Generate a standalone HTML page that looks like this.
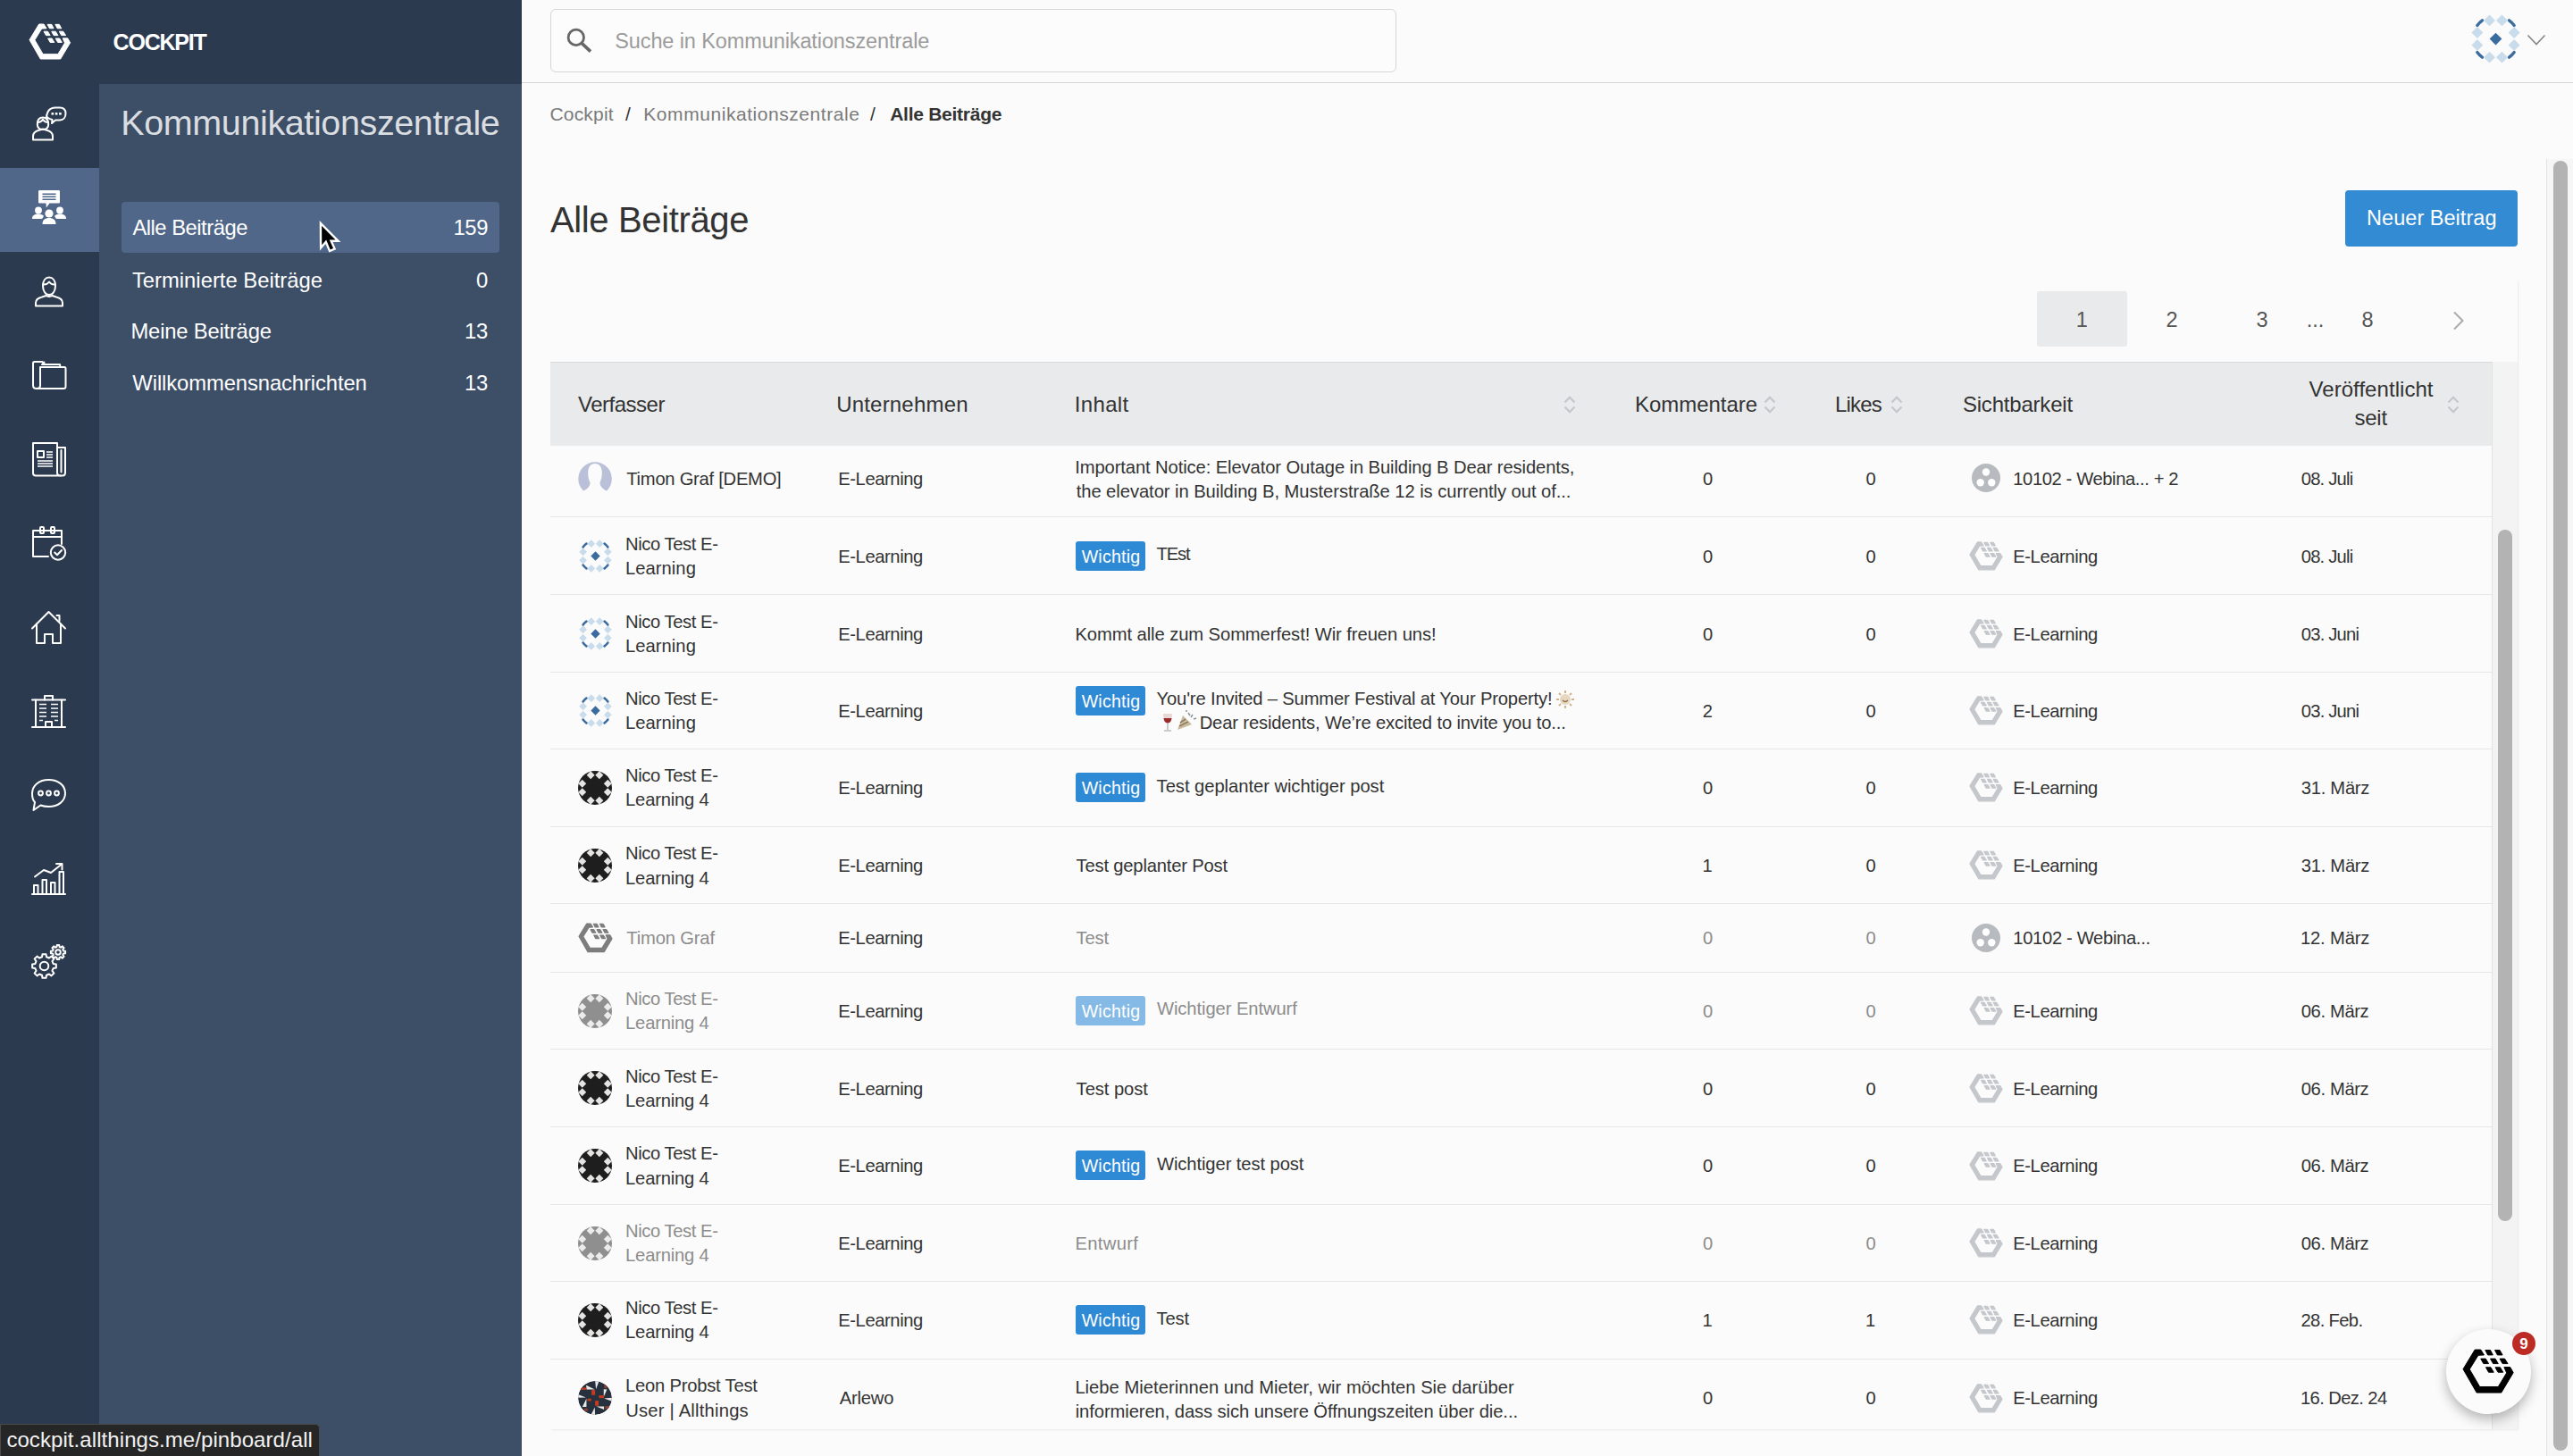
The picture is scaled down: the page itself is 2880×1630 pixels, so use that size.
<!DOCTYPE html>
<html><head><meta charset="utf-8"><title>Alle Beiträge</title>
<style>
html,body{margin:0;padding:0;}
body{width:2880px;height:1630px;overflow:hidden;position:relative;background:#fbfbfb;font-family:'Liberation Sans', sans-serif;}
.t{position:absolute;line-height:1;white-space:nowrap;}
svg{overflow:visible}
</style></head><body>
<div style="position:absolute;left:584.00px;top:0.00px;width:2296.00px;height:1630.00px;background:#fbfbfb;"></div><div style="position:absolute;left:584.00px;top:0.00px;width:2296.00px;height:92.00px;background:#fbfbfb;"></div><div style="position:absolute;left:584.00px;top:92.00px;width:2296.00px;height:1.00px;background:#d5d7da;"></div><div style="position:absolute;left:0.00px;top:0.00px;width:111.00px;height:1630.00px;background:#2c3a4f;"></div><div style="position:absolute;left:111.00px;top:0.00px;width:473.00px;height:94.00px;background:#2c3a4f;"></div><div style="position:absolute;left:111.00px;top:94.00px;width:473.00px;height:1536.00px;background:#3d4e67;"></div><div style="position:absolute;left:0.00px;top:188.00px;width:111.00px;height:94.00px;background:#506789;"></div><svg style="position:absolute;left:32.50px;top:26.50px;" width="45.60" height="39.01" viewBox="155 245 1280 1095"><g fill="#ffffff" stroke="#ffffff" stroke-width="28" stroke-linejoin="round"><path d="M455 245 L605 245 L690 380 L540 388 L320 745 L580 1190 L1050 1190 L1265 835 L1200 690 L1355 690 L1435 830 L1130 1340 L500 1340 L155 740 Z"/><path d="M720 255 L850 255 L915 380 L785 380 Z"/><path d="M965 255 L1090 255 L1160 380 L1030 380 Z"/><path d="M605 475 L730 475 L805 600 L675 600 Z"/><path d="M850 475 L975 475 L1050 600 L920 600 Z"/><path d="M1090 475 L1215 475 L1295 600 L1160 600 Z"/><path d="M735 695 L860 695 L935 820 L805 820 Z"/><path d="M975 695 L1100 695 L1175 820 L1045 820 Z"/></g></svg><svg style="position:absolute;left:36px;top:119px" width="38" height="38" viewBox="0 0 38 38"><g stroke="#fff" stroke-width="2" fill="none" stroke-linejoin="round" stroke-linecap="round"><path d="M16 14.5 C16 6 19 1.5 26 1.5 L31 1.5 C35.5 1.5 37.5 4 37.5 8 C37.5 12.5 35 15.5 31 15.5 L26 15.5 L22 19 L22.5 15 C19 14 16 12 16 10"/><path d="M1 37.5 L1 33.5 C1 29.5 4.5 27.5 8.5 26.5 L12 25.5 L15.5 26.5 C19.5 27.5 23 29.5 23 33.5 L23 37.5 Z"/><path d="M5.8 20 C5.8 15 8.5 12.5 12 12.5 C15.5 12.5 18.2 15 18.2 20 C18.2 24 15.5 26 12 26 C8.5 26 5.8 24 5.8 20 Z"/><path d="M6 18 C9 18 11 16.5 12 14.5 C13 16.5 15 18 18 18"/></g><g fill="#fff"><rect x="21.5" y="7" width="2.6" height="2.6"/><rect x="25.8" y="7" width="2.6" height="2.6"/><rect x="30.1" y="7" width="2.6" height="2.6"/></g></svg><svg style="position:absolute;left:36px;top:213px" width="38" height="38" viewBox="0 0 38 38"><path fill="#fff" d="M8.5 0 L29.5 0 C30.5 0 31 0.5 31 1.5 L31 13 C31 14 30.5 14.5 29.5 14.5 L19.5 14.5 L15.8 19.5 L15.5 14.5 L8.5 14.5 C7.5 14.5 7 14 7 13 L7 1.5 C7 0.5 7.5 0 8.5 0 Z"/><g stroke="#4f6789" stroke-width="1.6"><path d="M11.5 4.3 H26.5 M11.5 7.3 H26.5 M11.5 10.3 H26.5"/></g><g fill="#fff"><circle cx="7" cy="22.5" r="3.9"/><path d="M0 32 C0 27.8 3 26.5 7 26.5 C10 26.5 12 27.5 13 29 L11 32 Z"/><circle cx="31" cy="22.5" r="3.9"/><path d="M38 32 C38 27.8 35 26.5 31 26.5 C28 26.5 26 27.5 25 29 L27 32 Z"/><circle cx="19" cy="26" r="4.6"/><path d="M11.5 38 C11.5 33 14.5 31 19 31 C23.5 31 26.5 33 26.5 38 Z"/></g></svg><svg style="position:absolute;left:39px;top:309px" width="32" height="35" viewBox="0 0 32 35"><g stroke="#fff" stroke-width="2" fill="none" stroke-linejoin="round" stroke-linecap="round"><path d="M1 33.5 L1 30 C1 26.5 4 24.5 8 23.5 L12.5 22 L16 23 L19.5 22 L24 23.5 C28 24.5 31 26.5 31 30 L31 33.5 Z"/><path d="M9 11 C9 5 12 1.5 16 1.5 C20 1.5 23 5 23 11 C23 17 20 21 16 21 C12 21 9 17 9 11 Z"/><path d="M9.2 9.5 C12 10 14.5 8.5 16 6.5 C17.5 8.5 20 10 22.8 9.5"/></g></svg><svg style="position:absolute;left:36px;top:404px" width="38" height="32" viewBox="0 0 38 32"><g stroke="#fff" stroke-width="2" fill="none" stroke-linejoin="round" stroke-linecap="round"><path d="M5 31 C2.5 31 1 29.5 1 27.5 L1 2.5 C1 1.5 1.5 1 2.5 1 L11.5 1 L13 4 L13.5 1.5"/><path d="M5 31 C7.5 31 9 29.5 9 27.5 L9 7 L36 7 C37 7 37.5 7.5 37.5 8.5 L37.5 29 C37.5 30.5 36.5 31 35 31 Z"/><path d="M11 4 L31 4 L31.5 7"/></g></svg><svg style="position:absolute;left:36px;top:495px" width="38" height="39" viewBox="0 0 38 39"><g stroke="#fff" stroke-width="2" fill="none" stroke-linejoin="round" stroke-linecap="round"><path d="M1 1 L28 1 L28 34 C28 36 29.5 37.5 31.5 37.5 L4 37.5 C2 37.5 1 36.5 1 34.5 Z"/><path d="M28 6 L37 6 L37 34 C37 36 36 37.5 34 37.5 L31.5 37.5"/><path d="M32.5 9 L32.5 33.5"/><rect x="6" y="10" width="7" height="7"/></g><g stroke="#fff" stroke-width="1.6"><path d="M16 11 H23 M16 14 H23 M16 17 H23 M6 21 H23 M6 24 H23 M6 27 H23"/></g></svg><svg style="position:absolute;left:36px;top:589px" width="39" height="39" viewBox="0 0 39 39"><g stroke="#fff" stroke-width="2" fill="none" stroke-linejoin="round" stroke-linecap="round"><path d="M18 34 L1 34 L1 5 L33 5 L33 20"/><path d="M1 12 L33 12"/><rect x="9" y="1" width="4" height="7" rx="1"/><rect x="21" y="1" width="4" height="7" rx="1"/><circle cx="29" cy="29.5" r="8.2"/><path d="M25.2 29.5 L28 32.3 L33 27"/></g></svg><svg style="position:absolute;left:35px;top:684px" width="39" height="38" viewBox="0 0 39 38"><g stroke="#fff" stroke-width="2" fill="none" stroke-linejoin="round" stroke-linecap="round"><path d="M1 19.5 L19.5 1 L38 19.5"/><path d="M6 14.5 L6 36 L15 36 L15 26 L24 26 L24 36 L33 36 L33 14.5"/><path d="M28.5 5 L31.5 5 L31.5 11"/></g></svg><svg style="position:absolute;left:35px;top:777px" width="39" height="39" viewBox="0 0 39 39"><g stroke="#fff" stroke-width="2" fill="none" stroke-linejoin="round" stroke-linecap="round"><path d="M1 37 L38 37"/><path d="M1 6.5 L38 6.5"/><path d="M5 6.5 L5 37 M34 6.5 L34 37"/><path d="M15 6.5 L15 2 L24 2 L24 6.5"/><path d="M16 37 L16 31 L23 31 L23 37"/></g><g stroke="#fff" stroke-width="1.6"><path d="M9 11.5 H17 M22 11.5 H30 M9 16 H17 M22 16 H30 M9 20.5 H17 M22 20.5 H30 M9 25 H17 M22 25 H30 M9 29.5 H13 M26 29.5 H30"/></g></svg><svg style="position:absolute;left:35px;top:872px" width="39" height="36" viewBox="0 0 39 36"><g stroke="#fff" stroke-width="2" fill="none" stroke-linejoin="round" stroke-linecap="round"><path d="M4 26 C1.5 23.5 1 20 1 16.5 C1 7 9 1 19.5 1 C30 1 38 7 38 16 C38 25 30 31 19.5 31 C16 31 13 30.5 10.5 29.5 L2.5 35 Z"/><circle cx="10.5" cy="16" r="2.4"/><circle cx="19.5" cy="16" r="2.4"/><circle cx="28.5" cy="16" r="2.4"/></g></svg><svg style="position:absolute;left:35px;top:965px" width="39" height="37" viewBox="0 0 39 37"><g stroke="#fff" stroke-width="2" fill="none" stroke-linejoin="round" stroke-linecap="round"><path d="M1 36 L38 36"/><rect x="3" y="26" width="4.5" height="10"/><rect x="12.5" y="20" width="4.5" height="16"/><rect x="22" y="23" width="4.5" height="13"/><rect x="31.5" y="11" width="4.5" height="25"/><path d="M4 16.5 L14 9 L22 12 L34 2.5"/><path d="M28 2 L34.5 2 L34.5 8.5"/></g></svg><svg style="position:absolute;left:35px;top:1057px" width="40" height="40" viewBox="0 0 40 40"><g stroke="#fff" stroke-width="2" fill="none" stroke-linejoin="round" stroke-linecap="round"><path d="M24.71 22.03 L27.85 22.47 L27.85 26.53 L24.71 26.97 L23.46 29.97 L25.37 32.50 L22.50 35.37 L19.97 33.46 L16.97 34.71 L16.53 37.85 L12.47 37.85 L12.03 34.71 L9.03 33.46 L6.50 35.37 L3.63 32.50 L5.54 29.97 L4.29 26.97 L1.15 26.53 L1.15 22.47 L4.29 22.03 L5.54 19.03 L3.63 16.50 L6.50 13.63 L9.03 15.54 L12.03 14.29 L12.47 11.15 L16.53 11.15 L16.97 14.29 L19.97 15.54 L22.50 13.63 L25.37 16.50 L23.46 19.03 Z"/><circle cx="14.5" cy="24.5" r="4.8"/><path d="M36.03 7.54 L38.11 7.76 L38.11 10.24 L36.03 10.46 L35.29 12.23 L36.61 13.86 L34.86 15.61 L33.23 14.29 L31.46 15.03 L31.24 17.11 L28.76 17.11 L28.54 15.03 L26.77 14.29 L25.14 15.61 L23.39 13.86 L24.71 12.23 L23.97 10.46 L21.89 10.24 L21.89 7.76 L23.97 7.54 L24.71 5.77 L23.39 4.14 L25.14 2.39 L26.77 3.71 L28.54 2.97 L28.76 0.89 L31.24 0.89 L31.46 2.97 L33.23 3.71 L34.86 2.39 L36.61 4.14 L35.29 5.77 Z"/><circle cx="30" cy="9" r="2.8"/></g></svg><div class="t" style="left:126.60px;top:34.85px;font-size:25px;color:#ffffff;font-weight:700;letter-spacing:-1.219px;">COCKPIT</div><div class="t" style="left:135.24px;top:117.83px;font-size:39.5px;color:rgba(255,255,255,0.82);font-weight:400;letter-spacing:-0.380px;">Kommunikationszentrale</div><div style="position:absolute;left:136.00px;top:226.00px;width:423.00px;height:57.00px;background:#506789;border-radius:4px;"></div><div class="t" style="left:148.40px;top:243.47px;font-size:23.8px;color:#ffffff;font-weight:400;letter-spacing:-0.495px;">Alle Beiträge</div><div class="t" style="left:507.51px;top:243.47px;font-size:23.8px;color:#ffffff;font-weight:400;letter-spacing:-0.415px;">159</div><div class="t" style="left:147.92px;top:301.57px;font-size:23.8px;color:#ffffff;font-weight:400;letter-spacing:0.007px;">Terminierte Beiträge</div><div class="t" style="left:532.98px;top:301.57px;font-size:23.8px;color:#ffffff;font-weight:400;">0</div><div class="t" style="left:146.50px;top:359.27px;font-size:23.8px;color:#ffffff;font-weight:400;letter-spacing:-0.203px;">Meine Beiträge</div><div class="t" style="left:520.12px;top:359.27px;font-size:23.8px;color:#ffffff;font-weight:400;letter-spacing:-0.222px;">13</div><div class="t" style="left:148.34px;top:416.77px;font-size:23.8px;color:#ffffff;font-weight:400;letter-spacing:-0.095px;">Willkommensnachrichten</div><div class="t" style="left:520.12px;top:416.77px;font-size:23.8px;color:#ffffff;font-weight:400;letter-spacing:-0.222px;">13</div><div style="position:absolute;left:616px;top:10px;width:947px;height:71px;border:1px solid #d4d6d9;border-radius:6px;background:#fcfcfc;box-sizing:border-box"></div><svg style="position:absolute;left:634px;top:31px" width="29" height="29" viewBox="0 0 29 29"><circle cx="10.8" cy="10.9" r="8.7" stroke="#666" stroke-width="2.8" fill="none"/><path d="M16.6 16.9 L27 26.6" stroke="#666" stroke-width="3.6" stroke-linecap="butt"/></svg><div class="t" style="left:688.24px;top:34.83px;font-size:23.5px;color:#9b9b9b;font-weight:400;letter-spacing:-0.107px;">Suche in Kommunikationszentrale</div><svg style="position:absolute;left:2766.00px;top:15.80px" width="55" height="55" viewBox="-50 -50 100 100"><path d="M-12.7 -49.3 L-0.8999999999999986 -37.5 L-12.7 -25.7 L-24.5 -37.5 Z M12.7 -49.3 L24.5 -37.5 L12.7 -25.7 L0.8999999999999986 -37.5 Z M-37.5 -24.5 L-25.7 -12.7 L-37.5 -0.8999999999999986 L-49.3 -12.7 Z M-37.5 0.8999999999999986 L-25.7 12.7 L-37.5 24.5 L-49.3 12.7 Z M37.5 -24.5 L49.3 -12.7 L37.5 -0.8999999999999986 L25.7 -12.7 Z M37.5 0.8999999999999986 L49.3 12.7 L37.5 24.5 L25.7 12.7 Z M-12.7 25.7 L-0.8999999999999986 37.5 L-12.7 49.3 L-24.5 37.5 Z M12.7 25.7 L24.5 37.5 L12.7 49.3 L0.8999999999999986 37.5 Z" fill="#c9dcec"/><path d="M0 -12.5 L12.5 0 L0 12.5 L-12.5 0 Z" fill="#3b6b9f"/><path d="M37.62 27.33 A46.5 46.5 0 0 1 27.33 37.62" stroke="#3b6b9f" stroke-width="6" fill="none" stroke-linecap="round"/><path d="M-27.33 37.62 A46.5 46.5 0 0 1 -37.62 27.33" stroke="#3b6b9f" stroke-width="6" fill="none" stroke-linecap="round"/><path d="M-37.62 -27.33 A46.5 46.5 0 0 1 -27.33 -37.62" stroke="#3b6b9f" stroke-width="6" fill="none" stroke-linecap="round"/><path d="M27.33 -37.62 A46.5 46.5 0 0 1 37.62 -27.33" stroke="#3b6b9f" stroke-width="6" fill="none" stroke-linecap="round"/></svg><svg style="position:absolute;left:2828px;top:38px" width="22" height="14" viewBox="0 0 22 14"><path d="M1.5 1.5 L11 11.5 L20.5 1.5" stroke="#858585" stroke-width="1.6" fill="none"/></svg><div class="t" style="left:615.45px;top:116.85px;font-size:21px;color:#7a7a7a;font-weight:400;letter-spacing:0.187px;">Cockpit</div><div class="t" style="left:700.00px;top:116.85px;font-size:21px;color:#333;font-weight:400;">/</div><div class="t" style="left:720.32px;top:116.85px;font-size:21px;color:#7a7a7a;font-weight:400;letter-spacing:0.553px;">Kommunikationszentrale</div><div class="t" style="left:974.00px;top:116.85px;font-size:21px;color:#333;font-weight:400;">/</div><div class="t" style="left:996.18px;top:116.85px;font-size:21px;color:#333;font-weight:700;letter-spacing:-0.263px;">Alle Beiträge</div><div class="t" style="left:616.00px;top:226.00px;font-size:40px;color:#333;font-weight:400;letter-spacing:-0.367px;">Alle Beiträge</div><div style="position:absolute;left:2625.00px;top:213.00px;width:193.00px;height:62.60px;background:#338bd3;border-radius:4px;"></div><div class="t" style="left:2649.12px;top:233.43px;font-size:23.5px;color:#ffffff;font-weight:400;letter-spacing:0.029px;">Neuer Beitrag</div><div style="position:absolute;left:616px;top:314px;width:2202px;height:1286px;background:#fbfbfb;box-shadow:1px 1px 2px rgba(0,0,0,0.07)"></div><div style="position:absolute;left:2280.00px;top:326.00px;width:101.00px;height:62.00px;background:#e9eaec;border-radius:3px;"></div><div class="t" style="left:2323.66px;top:347.22px;font-size:23.5px;color:#555;font-weight:400;">1</div><div class="t" style="left:2424.45px;top:347.22px;font-size:23.5px;color:#555;font-weight:400;">2</div><div class="t" style="left:2525.54px;top:347.22px;font-size:23.5px;color:#555;font-weight:400;">3</div><div class="t" style="left:2581.72px;top:347.22px;font-size:23.5px;color:#555;font-weight:400;">...</div><div class="t" style="left:2643.45px;top:347.22px;font-size:23.5px;color:#555;font-weight:400;">8</div><svg style="position:absolute;left:2745px;top:348px" width="14" height="22" viewBox="0 0 14 22"><path d="M2 1.5 L11.5 11 L2 20.5" stroke="#aaa" stroke-width="2" fill="none"/></svg><div style="position:absolute;left:616.00px;top:405.00px;width:2173.00px;height:94.00px;background:#e8eaec;"></div><div style="position:absolute;left:616.00px;top:405.00px;width:2173.00px;height:1.00px;background:#d7d9db;"></div><div class="t" style="left:646.94px;top:441.10px;font-size:24px;color:#333;font-weight:400;letter-spacing:-0.490px;">Verfasser</div><div class="t" style="left:936.20px;top:441.10px;font-size:24px;color:#333;font-weight:400;letter-spacing:0.192px;">Unternehmen</div><div class="t" style="left:1202.84px;top:441.10px;font-size:24px;color:#333;font-weight:400;letter-spacing:0.320px;">Inhalt</div><svg style="position:absolute;left:1749.50px;top:443.00px" width="14" height="20" viewBox="0 0 14 20"><path d="M1.5 7.5 L7 1.8 L12.5 7.5 M1.5 12.5 L7 18.2 L12.5 12.5" stroke="#c3c6ca" stroke-width="2" fill="none"/></svg><div class="t" style="left:1830.08px;top:441.10px;font-size:24px;color:#333;font-weight:400;letter-spacing:-0.044px;">Kommentare</div><svg style="position:absolute;left:1973.50px;top:443.00px" width="14" height="20" viewBox="0 0 14 20"><path d="M1.5 7.5 L7 1.8 L12.5 7.5 M1.5 12.5 L7 18.2 L12.5 12.5" stroke="#c3c6ca" stroke-width="2" fill="none"/></svg><div class="t" style="left:2054.08px;top:441.10px;font-size:24px;color:#333;font-weight:400;letter-spacing:-0.820px;">Likes</div><svg style="position:absolute;left:2115.50px;top:443.00px" width="14" height="20" viewBox="0 0 14 20"><path d="M1.5 7.5 L7 1.8 L12.5 7.5 M1.5 12.5 L7 18.2 L12.5 12.5" stroke="#c3c6ca" stroke-width="2" fill="none"/></svg><div class="t" style="left:2196.92px;top:441.10px;font-size:24px;color:#333;font-weight:400;letter-spacing:-0.200px;">Sichtbarkeit</div><div class="t" style="left:2584.54px;top:424.40px;font-size:24px;color:#333;font-weight:400;letter-spacing:0.052px;">Veröffentlicht</div><div class="t" style="left:2635.44px;top:455.60px;font-size:24px;color:#333;font-weight:400;letter-spacing:-0.247px;">seit</div><svg style="position:absolute;left:2738.50px;top:443.00px" width="14" height="20" viewBox="0 0 14 20"><path d="M1.5 7.5 L7 1.8 L12.5 7.5 M1.5 12.5 L7 18.2 L12.5 12.5" stroke="#c3c6ca" stroke-width="2" fill="none"/></svg><div style="position:absolute;left:2789.00px;top:405.00px;width:29.00px;height:1195.00px;background:#f3f3f3;border-left:1px solid #e3e3e3;box-sizing:border-box;"></div><div style="position:absolute;left:2795.70px;top:593.00px;width:16.30px;height:774.00px;background:#b3b3b3;border-radius:8px;"></div><div style="position:absolute;left:616.00px;top:577.80px;width:2173.00px;height:1.00px;background:#e5e6e7;"></div><svg style="position:absolute;left:640px;top:510.0px" width="52" height="46" viewBox="0 0 52 46"><circle cx="26.05" cy="26.05" r="18.75" fill="#b9c0d8"/><path fill="#fbfbfb" d="M26 8.9 C31.2 8.9 33.8 13 33.8 19 C33.8 24 33 27 31.6 30 C31 33 33.5 36.5 38.8 39.6 L41 46 L11 46 L13.2 39.6 C18.5 37 21 33 20.4 30 C19 27 18.2 24 18.2 19 C18.2 13 20.8 8.9 26 8.9 Z"/><rect x="0" y="39.8" width="52" height="7" fill="#fbfbfb"/></svg><div class="t" style="left:701.30px;top:525.53px;font-size:20.2px;color:#333;font-weight:400;letter-spacing:-0.262px;">Timon Graf [DEMO]</div><div class="t" style="left:938.18px;top:525.53px;font-size:20.2px;color:#333;font-weight:400;letter-spacing:-0.400px;">E-Learning</div><div class="t" style="left:1203.18px;top:513.03px;font-size:20.2px;color:#333;font-weight:400;letter-spacing:-0.102px;">Important Notice: Elevator Outage in Building B Dear residents,</div><div class="t" style="left:1204.70px;top:540.23px;font-size:20.2px;color:#333;font-weight:400;letter-spacing:-0.060px;">the elevator in Building B, Musterstraße 12 is currently out of...</div><div class="t" style="left:1905.89px;top:525.53px;font-size:20.2px;color:#333;font-weight:400;">0</div><div class="t" style="left:2088.39px;top:525.53px;font-size:20.2px;color:#333;font-weight:400;">0</div><svg style="position:absolute;left:2206.70px;top:519.20px" width="32" height="32" viewBox="-16 -16 32 32"><circle r="16" fill="#b7babe"/><circle cx="0" cy="-6.5" r="4.2" fill="#fff"/><circle cx="-6.3" cy="5.2" r="4.2" fill="#fff"/><circle cx="6.3" cy="5.2" r="4.2" fill="#fff"/></svg><div class="t" style="left:2253.29px;top:525.53px;font-size:20.2px;color:#333;font-weight:400;letter-spacing:-0.402px;">10102 - Webina... + 2</div><div class="t" style="left:2575.74px;top:525.53px;font-size:20.2px;color:#333;font-weight:400;letter-spacing:-0.788px;">08. Juli</div><div style="position:absolute;left:616.00px;top:665.00px;width:2173.00px;height:1.00px;background:#e5e6e7;"></div><svg style="position:absolute;left:647.50px;top:604.00px" width="37" height="37" viewBox="-50 -50 100 100"><path d="M-12.7 -49.3 L-0.8999999999999986 -37.5 L-12.7 -25.7 L-24.5 -37.5 Z M12.7 -49.3 L24.5 -37.5 L12.7 -25.7 L0.8999999999999986 -37.5 Z M-37.5 -24.5 L-25.7 -12.7 L-37.5 -0.8999999999999986 L-49.3 -12.7 Z M-37.5 0.8999999999999986 L-25.7 12.7 L-37.5 24.5 L-49.3 12.7 Z M37.5 -24.5 L49.3 -12.7 L37.5 -0.8999999999999986 L25.7 -12.7 Z M37.5 0.8999999999999986 L49.3 12.7 L37.5 24.5 L25.7 12.7 Z M-12.7 25.7 L-0.8999999999999986 37.5 L-12.7 49.3 L-24.5 37.5 Z M12.7 25.7 L24.5 37.5 L12.7 49.3 L0.8999999999999986 37.5 Z" fill="#c9dcec"/><path d="M0 -14 L14 0 L0 14 L-14 0 Z" fill="#3b6b9f"/><path d="M37.62 27.33 A46.5 46.5 0 0 1 27.33 37.62" stroke="#3b6b9f" stroke-width="7" fill="none" stroke-linecap="round"/><path d="M-27.33 37.62 A46.5 46.5 0 0 1 -37.62 27.33" stroke="#3b6b9f" stroke-width="7" fill="none" stroke-linecap="round"/><path d="M-37.62 -27.33 A46.5 46.5 0 0 1 -27.33 -37.62" stroke="#3b6b9f" stroke-width="7" fill="none" stroke-linecap="round"/><path d="M27.33 -37.62 A46.5 46.5 0 0 1 37.62 -27.33" stroke="#3b6b9f" stroke-width="7" fill="none" stroke-linecap="round"/></svg><div class="t" style="left:700.08px;top:598.83px;font-size:20.2px;color:#333;font-weight:400;letter-spacing:-0.423px;">Nico Test E-</div><div class="t" style="left:700.08px;top:626.13px;font-size:20.2px;color:#333;font-weight:400;letter-spacing:0.029px;">Learning</div><div class="t" style="left:938.18px;top:612.83px;font-size:20.2px;color:#333;font-weight:400;letter-spacing:-0.400px;">E-Learning</div><div style="position:absolute;left:1204.30px;top:605.90px;width:77.50px;height:33.00px;background:#2f8ad6;border-radius:3px;"></div><div class="t" style="left:1210.65px;top:613.84px;font-size:19.6px;color:#ffffff;font-weight:400;letter-spacing:0.222px;">Wichtig</div><div class="t" style="left:1294.60px;top:610.33px;font-size:20.2px;color:#333;font-weight:400;letter-spacing:-1.169px;">TEst</div><div class="t" style="left:1905.89px;top:612.83px;font-size:20.2px;color:#333;font-weight:400;">0</div><div class="t" style="left:2088.39px;top:612.83px;font-size:20.2px;color:#333;font-weight:400;">0</div><svg style="position:absolute;left:2204.50px;top:607.00px;" width="36.00" height="30.80" viewBox="155 245 1280 1095"><g fill="#c4c7cb" stroke="#c4c7cb" stroke-width="45" stroke-linejoin="round"><path d="M455 245 L605 245 L690 380 L540 388 L320 745 L580 1190 L1050 1190 L1265 835 L1200 690 L1355 690 L1435 830 L1130 1340 L500 1340 L155 740 Z"/><path d="M720 255 L850 255 L915 380 L785 380 Z"/><path d="M965 255 L1090 255 L1160 380 L1030 380 Z"/><path d="M605 475 L730 475 L805 600 L675 600 Z"/><path d="M850 475 L975 475 L1050 600 L920 600 Z"/><path d="M1090 475 L1215 475 L1295 600 L1160 600 Z"/><path d="M735 695 L860 695 L935 820 L805 820 Z"/><path d="M975 695 L1100 695 L1175 820 L1045 820 Z"/></g></svg><div class="t" style="left:2253.18px;top:612.83px;font-size:20.2px;color:#333;font-weight:400;letter-spacing:-0.400px;">E-Learning</div><div class="t" style="left:2575.74px;top:612.83px;font-size:20.2px;color:#333;font-weight:400;letter-spacing:-0.788px;">08. Juli</div><div style="position:absolute;left:616.00px;top:751.50px;width:2173.00px;height:1.00px;background:#e5e6e7;"></div><svg style="position:absolute;left:647.50px;top:690.70px" width="37" height="37" viewBox="-50 -50 100 100"><path d="M-12.7 -49.3 L-0.8999999999999986 -37.5 L-12.7 -25.7 L-24.5 -37.5 Z M12.7 -49.3 L24.5 -37.5 L12.7 -25.7 L0.8999999999999986 -37.5 Z M-37.5 -24.5 L-25.7 -12.7 L-37.5 -0.8999999999999986 L-49.3 -12.7 Z M-37.5 0.8999999999999986 L-25.7 12.7 L-37.5 24.5 L-49.3 12.7 Z M37.5 -24.5 L49.3 -12.7 L37.5 -0.8999999999999986 L25.7 -12.7 Z M37.5 0.8999999999999986 L49.3 12.7 L37.5 24.5 L25.7 12.7 Z M-12.7 25.7 L-0.8999999999999986 37.5 L-12.7 49.3 L-24.5 37.5 Z M12.7 25.7 L24.5 37.5 L12.7 49.3 L0.8999999999999986 37.5 Z" fill="#c9dcec"/><path d="M0 -14 L14 0 L0 14 L-14 0 Z" fill="#3b6b9f"/><path d="M37.62 27.33 A46.5 46.5 0 0 1 27.33 37.62" stroke="#3b6b9f" stroke-width="7" fill="none" stroke-linecap="round"/><path d="M-27.33 37.62 A46.5 46.5 0 0 1 -37.62 27.33" stroke="#3b6b9f" stroke-width="7" fill="none" stroke-linecap="round"/><path d="M-37.62 -27.33 A46.5 46.5 0 0 1 -27.33 -37.62" stroke="#3b6b9f" stroke-width="7" fill="none" stroke-linecap="round"/><path d="M27.33 -37.62 A46.5 46.5 0 0 1 37.62 -27.33" stroke="#3b6b9f" stroke-width="7" fill="none" stroke-linecap="round"/></svg><div class="t" style="left:700.08px;top:685.53px;font-size:20.2px;color:#333;font-weight:400;letter-spacing:-0.423px;">Nico Test E-</div><div class="t" style="left:700.08px;top:712.83px;font-size:20.2px;color:#333;font-weight:400;letter-spacing:0.029px;">Learning</div><div class="t" style="left:938.18px;top:699.53px;font-size:20.2px;color:#333;font-weight:400;letter-spacing:-0.400px;">E-Learning</div><div class="t" style="left:1203.38px;top:699.53px;font-size:20.2px;color:#333;font-weight:400;letter-spacing:-0.074px;">Kommt alle zum Sommerfest! Wir freuen uns!</div><div class="t" style="left:1905.89px;top:699.53px;font-size:20.2px;color:#333;font-weight:400;">0</div><div class="t" style="left:2088.39px;top:699.53px;font-size:20.2px;color:#333;font-weight:400;">0</div><svg style="position:absolute;left:2204.50px;top:693.70px;" width="36.00" height="30.80" viewBox="155 245 1280 1095"><g fill="#c4c7cb" stroke="#c4c7cb" stroke-width="45" stroke-linejoin="round"><path d="M455 245 L605 245 L690 380 L540 388 L320 745 L580 1190 L1050 1190 L1265 835 L1200 690 L1355 690 L1435 830 L1130 1340 L500 1340 L155 740 Z"/><path d="M720 255 L850 255 L915 380 L785 380 Z"/><path d="M965 255 L1090 255 L1160 380 L1030 380 Z"/><path d="M605 475 L730 475 L805 600 L675 600 Z"/><path d="M850 475 L975 475 L1050 600 L920 600 Z"/><path d="M1090 475 L1215 475 L1295 600 L1160 600 Z"/><path d="M735 695 L860 695 L935 820 L805 820 Z"/><path d="M975 695 L1100 695 L1175 820 L1045 820 Z"/></g></svg><div class="t" style="left:2253.18px;top:699.53px;font-size:20.2px;color:#333;font-weight:400;letter-spacing:-0.400px;">E-Learning</div><div class="t" style="left:2575.74px;top:699.53px;font-size:20.2px;color:#333;font-weight:400;letter-spacing:-0.776px;">03. Juni</div><div style="position:absolute;left:616.00px;top:838.20px;width:2173.00px;height:1.00px;background:#e5e6e7;"></div><svg style="position:absolute;left:647.50px;top:776.70px" width="37" height="37" viewBox="-50 -50 100 100"><path d="M-12.7 -49.3 L-0.8999999999999986 -37.5 L-12.7 -25.7 L-24.5 -37.5 Z M12.7 -49.3 L24.5 -37.5 L12.7 -25.7 L0.8999999999999986 -37.5 Z M-37.5 -24.5 L-25.7 -12.7 L-37.5 -0.8999999999999986 L-49.3 -12.7 Z M-37.5 0.8999999999999986 L-25.7 12.7 L-37.5 24.5 L-49.3 12.7 Z M37.5 -24.5 L49.3 -12.7 L37.5 -0.8999999999999986 L25.7 -12.7 Z M37.5 0.8999999999999986 L49.3 12.7 L37.5 24.5 L25.7 12.7 Z M-12.7 25.7 L-0.8999999999999986 37.5 L-12.7 49.3 L-24.5 37.5 Z M12.7 25.7 L24.5 37.5 L12.7 49.3 L0.8999999999999986 37.5 Z" fill="#c9dcec"/><path d="M0 -14 L14 0 L0 14 L-14 0 Z" fill="#3b6b9f"/><path d="M37.62 27.33 A46.5 46.5 0 0 1 27.33 37.62" stroke="#3b6b9f" stroke-width="7" fill="none" stroke-linecap="round"/><path d="M-27.33 37.62 A46.5 46.5 0 0 1 -37.62 27.33" stroke="#3b6b9f" stroke-width="7" fill="none" stroke-linecap="round"/><path d="M-37.62 -27.33 A46.5 46.5 0 0 1 -27.33 -37.62" stroke="#3b6b9f" stroke-width="7" fill="none" stroke-linecap="round"/><path d="M27.33 -37.62 A46.5 46.5 0 0 1 37.62 -27.33" stroke="#3b6b9f" stroke-width="7" fill="none" stroke-linecap="round"/></svg><div class="t" style="left:700.08px;top:771.53px;font-size:20.2px;color:#333;font-weight:400;letter-spacing:-0.423px;">Nico Test E-</div><div class="t" style="left:700.08px;top:798.83px;font-size:20.2px;color:#333;font-weight:400;letter-spacing:0.029px;">Learning</div><div class="t" style="left:938.18px;top:785.53px;font-size:20.2px;color:#333;font-weight:400;letter-spacing:-0.400px;">E-Learning</div><div style="position:absolute;left:1204.30px;top:768.20px;width:77.50px;height:33.00px;background:#2f8ad6;border-radius:3px;"></div><div class="t" style="left:1210.65px;top:776.14px;font-size:19.6px;color:#ffffff;font-weight:400;letter-spacing:0.222px;">Wichtig</div><div class="t" style="left:1294.60px;top:771.83px;font-size:20.2px;color:#333;font-weight:400;letter-spacing:-0.161px;">You're Invited – Summer Festival at Your Property!</div><div class="t" style="left:1342.68px;top:799.23px;font-size:20.2px;color:#333;font-weight:400;letter-spacing:-0.143px;">Dear residents, We’re excited to invite you to...</div><svg style="position:absolute;left:1741.0px;top:772.0px" width="22" height="22" viewBox="0 0 22 22"><circle cx="11" cy="11" r="6" fill="#e8d7bf"/><g stroke="#cfb38d" stroke-width="2"><path d="M11 1 V4 M11 18 V21 M1 11 H4 M18 11 H21 M4 4 L6 6 M16 16 L18 18 M18 4 L16 6 M4 18 L6 16"/></g><path d="M8 12 Q11 15 14 12" stroke="#8a6d4a" stroke-width="1.3" fill="none"/></svg><svg style="position:absolute;left:1299.0px;top:797.4px" width="16" height="24" viewBox="0 0 16 24"><path d="M3 2 H13 Q13 12 8 13 Q3 12 3 2 Z" fill="#e9d9d5"/><path d="M3.5 7 H12.5 Q12 12 8 12.5 Q4 12 3.5 7 Z" fill="#9b2c2c"/><path d="M8 13 V20 M4 21 H12" stroke="#bbb" stroke-width="1.5"/></svg><svg style="position:absolute;left:1316.0px;top:795.4px" width="24" height="24" viewBox="0 0 24 24"><path d="M2 22 L8 6 L18 16 Z" fill="#c9b99a"/><path d="M5 14 L11 10 M4 18 L14 13" stroke="#7a6a5a" stroke-width="1.3"/><g stroke="#8a8f99" stroke-width="1.5"><path d="M14 3 L16 6 M19 5 L17 8 M20 10 L23 9 M12 2 V0"/></g></svg><div class="t" style="left:1905.87px;top:785.53px;font-size:20.2px;color:#333;font-weight:400;">2</div><div class="t" style="left:2088.39px;top:785.53px;font-size:20.2px;color:#333;font-weight:400;">0</div><svg style="position:absolute;left:2204.50px;top:779.70px;" width="36.00" height="30.80" viewBox="155 245 1280 1095"><g fill="#c4c7cb" stroke="#c4c7cb" stroke-width="45" stroke-linejoin="round"><path d="M455 245 L605 245 L690 380 L540 388 L320 745 L580 1190 L1050 1190 L1265 835 L1200 690 L1355 690 L1435 830 L1130 1340 L500 1340 L155 740 Z"/><path d="M720 255 L850 255 L915 380 L785 380 Z"/><path d="M965 255 L1090 255 L1160 380 L1030 380 Z"/><path d="M605 475 L730 475 L805 600 L675 600 Z"/><path d="M850 475 L975 475 L1050 600 L920 600 Z"/><path d="M1090 475 L1215 475 L1295 600 L1160 600 Z"/><path d="M735 695 L860 695 L935 820 L805 820 Z"/><path d="M975 695 L1100 695 L1175 820 L1045 820 Z"/></g></svg><div class="t" style="left:2253.18px;top:785.53px;font-size:20.2px;color:#333;font-weight:400;letter-spacing:-0.400px;">E-Learning</div><div class="t" style="left:2575.74px;top:785.53px;font-size:20.2px;color:#333;font-weight:400;letter-spacing:-0.776px;">03. Juni</div><div style="position:absolute;left:616.00px;top:924.70px;width:2173.00px;height:1.00px;background:#e5e6e7;"></div><svg style="position:absolute;left:647.00px;top:862.80px" width="38" height="38" viewBox="-50 -50 100 100"><circle r="50" fill="#1e1e1e"/><path d="M-12.7 -49.3 L-0.8999999999999986 -37.5 L-12.7 -25.7 L-24.5 -37.5 Z M12.7 -49.3 L24.5 -37.5 L12.7 -25.7 L0.8999999999999986 -37.5 Z M-37.5 -24.5 L-25.7 -12.7 L-37.5 -0.8999999999999986 L-49.3 -12.7 Z M-37.5 0.8999999999999986 L-25.7 12.7 L-37.5 24.5 L-49.3 12.7 Z M37.5 -24.5 L49.3 -12.7 L37.5 -0.8999999999999986 L25.7 -12.7 Z M37.5 0.8999999999999986 L49.3 12.7 L37.5 24.5 L25.7 12.7 Z M-12.7 25.7 L-0.8999999999999986 37.5 L-12.7 49.3 L-24.5 37.5 Z M12.7 25.7 L24.5 37.5 L12.7 49.3 L0.8999999999999986 37.5 Z" fill="#e6e4e2"/></svg><div class="t" style="left:700.08px;top:858.13px;font-size:20.2px;color:#333;font-weight:400;letter-spacing:-0.423px;">Nico Test E-</div><div class="t" style="left:700.08px;top:885.43px;font-size:20.2px;color:#333;font-weight:400;letter-spacing:-0.197px;">Learning 4</div><div class="t" style="left:938.18px;top:872.13px;font-size:20.2px;color:#333;font-weight:400;letter-spacing:-0.400px;">E-Learning</div><div style="position:absolute;left:1204.30px;top:865.20px;width:77.50px;height:33.00px;background:#2f8ad6;border-radius:3px;"></div><div class="t" style="left:1210.65px;top:873.14px;font-size:19.6px;color:#ffffff;font-weight:400;letter-spacing:0.222px;">Wichtig</div><div class="t" style="left:1294.60px;top:869.63px;font-size:20.2px;color:#333;font-weight:400;letter-spacing:-0.042px;">Test geplanter wichtiger post</div><div class="t" style="left:1905.89px;top:872.13px;font-size:20.2px;color:#333;font-weight:400;">0</div><div class="t" style="left:2088.39px;top:872.13px;font-size:20.2px;color:#333;font-weight:400;">0</div><svg style="position:absolute;left:2204.50px;top:866.30px;" width="36.00" height="30.80" viewBox="155 245 1280 1095"><g fill="#c4c7cb" stroke="#c4c7cb" stroke-width="45" stroke-linejoin="round"><path d="M455 245 L605 245 L690 380 L540 388 L320 745 L580 1190 L1050 1190 L1265 835 L1200 690 L1355 690 L1435 830 L1130 1340 L500 1340 L155 740 Z"/><path d="M720 255 L850 255 L915 380 L785 380 Z"/><path d="M965 255 L1090 255 L1160 380 L1030 380 Z"/><path d="M605 475 L730 475 L805 600 L675 600 Z"/><path d="M850 475 L975 475 L1050 600 L920 600 Z"/><path d="M1090 475 L1215 475 L1295 600 L1160 600 Z"/><path d="M735 695 L860 695 L935 820 L805 820 Z"/><path d="M975 695 L1100 695 L1175 820 L1045 820 Z"/></g></svg><div class="t" style="left:2253.18px;top:872.13px;font-size:20.2px;color:#333;font-weight:400;letter-spacing:-0.400px;">E-Learning</div><div class="t" style="left:2575.74px;top:872.13px;font-size:20.2px;color:#333;font-weight:400;letter-spacing:-0.266px;">31. März</div><div style="position:absolute;left:616.00px;top:1011.20px;width:2173.00px;height:1.00px;background:#e5e6e7;"></div><svg style="position:absolute;left:647.00px;top:949.90px" width="38" height="38" viewBox="-50 -50 100 100"><circle r="50" fill="#1e1e1e"/><path d="M-12.7 -49.3 L-0.8999999999999986 -37.5 L-12.7 -25.7 L-24.5 -37.5 Z M12.7 -49.3 L24.5 -37.5 L12.7 -25.7 L0.8999999999999986 -37.5 Z M-37.5 -24.5 L-25.7 -12.7 L-37.5 -0.8999999999999986 L-49.3 -12.7 Z M-37.5 0.8999999999999986 L-25.7 12.7 L-37.5 24.5 L-49.3 12.7 Z M37.5 -24.5 L49.3 -12.7 L37.5 -0.8999999999999986 L25.7 -12.7 Z M37.5 0.8999999999999986 L49.3 12.7 L37.5 24.5 L25.7 12.7 Z M-12.7 25.7 L-0.8999999999999986 37.5 L-12.7 49.3 L-24.5 37.5 Z M12.7 25.7 L24.5 37.5 L12.7 49.3 L0.8999999999999986 37.5 Z" fill="#e6e4e2"/></svg><div class="t" style="left:700.08px;top:945.23px;font-size:20.2px;color:#333;font-weight:400;letter-spacing:-0.423px;">Nico Test E-</div><div class="t" style="left:700.08px;top:972.53px;font-size:20.2px;color:#333;font-weight:400;letter-spacing:-0.197px;">Learning 4</div><div class="t" style="left:938.18px;top:959.23px;font-size:20.2px;color:#333;font-weight:400;letter-spacing:-0.400px;">E-Learning</div><div class="t" style="left:1204.60px;top:959.23px;font-size:20.2px;color:#333;font-weight:400;letter-spacing:-0.189px;">Test geplanter Post</div><div class="t" style="left:1905.62px;top:959.23px;font-size:20.2px;color:#333;font-weight:400;">1</div><div class="t" style="left:2088.39px;top:959.23px;font-size:20.2px;color:#333;font-weight:400;">0</div><svg style="position:absolute;left:2204.50px;top:953.40px;" width="36.00" height="30.80" viewBox="155 245 1280 1095"><g fill="#c4c7cb" stroke="#c4c7cb" stroke-width="45" stroke-linejoin="round"><path d="M455 245 L605 245 L690 380 L540 388 L320 745 L580 1190 L1050 1190 L1265 835 L1200 690 L1355 690 L1435 830 L1130 1340 L500 1340 L155 740 Z"/><path d="M720 255 L850 255 L915 380 L785 380 Z"/><path d="M965 255 L1090 255 L1160 380 L1030 380 Z"/><path d="M605 475 L730 475 L805 600 L675 600 Z"/><path d="M850 475 L975 475 L1050 600 L920 600 Z"/><path d="M1090 475 L1215 475 L1295 600 L1160 600 Z"/><path d="M735 695 L860 695 L935 820 L805 820 Z"/><path d="M975 695 L1100 695 L1175 820 L1045 820 Z"/></g></svg><div class="t" style="left:2253.18px;top:959.23px;font-size:20.2px;color:#333;font-weight:400;letter-spacing:-0.400px;">E-Learning</div><div class="t" style="left:2575.74px;top:959.23px;font-size:20.2px;color:#333;font-weight:400;letter-spacing:-0.266px;">31. März</div><div style="position:absolute;left:616.00px;top:1087.80px;width:2173.00px;height:1.00px;background:#e5e6e7;"></div><svg style="position:absolute;left:647.50px;top:1034.40px;" width="37.00" height="31.65" viewBox="155 245 1280 1095"><g fill="#7d7d7d" stroke="#7d7d7d" stroke-width="40" stroke-linejoin="round"><path d="M455 245 L605 245 L690 380 L540 388 L320 745 L580 1190 L1050 1190 L1265 835 L1200 690 L1355 690 L1435 830 L1130 1340 L500 1340 L155 740 Z"/><path d="M720 255 L850 255 L915 380 L785 380 Z"/><path d="M965 255 L1090 255 L1160 380 L1030 380 Z"/><path d="M605 475 L730 475 L805 600 L675 600 Z"/><path d="M850 475 L975 475 L1050 600 L920 600 Z"/><path d="M1090 475 L1215 475 L1295 600 L1160 600 Z"/><path d="M735 695 L860 695 L935 820 L805 820 Z"/><path d="M975 695 L1100 695 L1175 820 L1045 820 Z"/></g></svg><div class="t" style="left:701.30px;top:1040.23px;font-size:20.2px;color:#8c8c8c;font-weight:400;letter-spacing:-0.165px;">Timon Graf</div><div class="t" style="left:938.18px;top:1040.23px;font-size:20.2px;color:#333;font-weight:400;letter-spacing:-0.400px;">E-Learning</div><div class="t" style="left:1204.60px;top:1040.23px;font-size:20.2px;color:#8c8c8c;font-weight:400;letter-spacing:-0.170px;">Test</div><div class="t" style="left:1905.89px;top:1040.23px;font-size:20.2px;color:#8c8c8c;font-weight:400;">0</div><div class="t" style="left:2088.39px;top:1040.23px;font-size:20.2px;color:#8c8c8c;font-weight:400;">0</div><svg style="position:absolute;left:2206.70px;top:1033.90px" width="32" height="32" viewBox="-16 -16 32 32"><circle r="16" fill="#b7babe"/><circle cx="0" cy="-6.5" r="4.2" fill="#fff"/><circle cx="-6.3" cy="5.2" r="4.2" fill="#fff"/><circle cx="6.3" cy="5.2" r="4.2" fill="#fff"/></svg><div class="t" style="left:2253.29px;top:1040.23px;font-size:20.2px;color:#333;font-weight:400;letter-spacing:-0.328px;">10102 - Webina...</div><div class="t" style="left:2574.99px;top:1040.23px;font-size:20.2px;color:#333;font-weight:400;letter-spacing:-0.158px;">12. März</div><div style="position:absolute;left:616.00px;top:1174.40px;width:2173.00px;height:1.00px;background:#e5e6e7;"></div><svg style="position:absolute;left:647.00px;top:1112.50px" width="38" height="38" viewBox="-50 -50 100 100"><circle r="50" fill="#8f8f8f"/><path d="M-12.7 -49.3 L-0.8999999999999986 -37.5 L-12.7 -25.7 L-24.5 -37.5 Z M12.7 -49.3 L24.5 -37.5 L12.7 -25.7 L0.8999999999999986 -37.5 Z M-37.5 -24.5 L-25.7 -12.7 L-37.5 -0.8999999999999986 L-49.3 -12.7 Z M-37.5 0.8999999999999986 L-25.7 12.7 L-37.5 24.5 L-49.3 12.7 Z M37.5 -24.5 L49.3 -12.7 L37.5 -0.8999999999999986 L25.7 -12.7 Z M37.5 0.8999999999999986 L49.3 12.7 L37.5 24.5 L25.7 12.7 Z M-12.7 25.7 L-0.8999999999999986 37.5 L-12.7 49.3 L-24.5 37.5 Z M12.7 25.7 L24.5 37.5 L12.7 49.3 L0.8999999999999986 37.5 Z" fill="#ececec"/></svg><div class="t" style="left:700.08px;top:1107.83px;font-size:20.2px;color:#8c8c8c;font-weight:400;letter-spacing:-0.423px;">Nico Test E-</div><div class="t" style="left:700.08px;top:1135.13px;font-size:20.2px;color:#8c8c8c;font-weight:400;letter-spacing:-0.197px;">Learning 4</div><div class="t" style="left:938.18px;top:1121.83px;font-size:20.2px;color:#333;font-weight:400;letter-spacing:-0.400px;">E-Learning</div><div style="position:absolute;left:1204.30px;top:1114.90px;width:77.50px;height:33.00px;background:#84bae5;border-radius:3px;"></div><div class="t" style="left:1210.65px;top:1122.84px;font-size:19.6px;color:#ffffff;font-weight:400;letter-spacing:0.222px;">Wichtig</div><div class="t" style="left:1294.95px;top:1119.33px;font-size:20.2px;color:#8c8c8c;font-weight:400;letter-spacing:-0.079px;">Wichtiger Entwurf</div><div class="t" style="left:1905.89px;top:1121.83px;font-size:20.2px;color:#8c8c8c;font-weight:400;">0</div><div class="t" style="left:2088.39px;top:1121.83px;font-size:20.2px;color:#8c8c8c;font-weight:400;">0</div><svg style="position:absolute;left:2204.50px;top:1116.00px;" width="36.00" height="30.80" viewBox="155 245 1280 1095"><g fill="#c4c7cb" stroke="#c4c7cb" stroke-width="45" stroke-linejoin="round"><path d="M455 245 L605 245 L690 380 L540 388 L320 745 L580 1190 L1050 1190 L1265 835 L1200 690 L1355 690 L1435 830 L1130 1340 L500 1340 L155 740 Z"/><path d="M720 255 L850 255 L915 380 L785 380 Z"/><path d="M965 255 L1090 255 L1160 380 L1030 380 Z"/><path d="M605 475 L730 475 L805 600 L675 600 Z"/><path d="M850 475 L975 475 L1050 600 L920 600 Z"/><path d="M1090 475 L1215 475 L1295 600 L1160 600 Z"/><path d="M735 695 L860 695 L935 820 L805 820 Z"/><path d="M975 695 L1100 695 L1175 820 L1045 820 Z"/></g></svg><div class="t" style="left:2253.18px;top:1121.83px;font-size:20.2px;color:#333;font-weight:400;letter-spacing:-0.400px;">E-Learning</div><div class="t" style="left:2575.74px;top:1121.83px;font-size:20.2px;color:#333;font-weight:400;letter-spacing:-0.366px;">06. März</div><div style="position:absolute;left:616.00px;top:1261.00px;width:2173.00px;height:1.00px;background:#e5e6e7;"></div><svg style="position:absolute;left:647.00px;top:1199.40px" width="38" height="38" viewBox="-50 -50 100 100"><circle r="50" fill="#1e1e1e"/><path d="M-12.7 -49.3 L-0.8999999999999986 -37.5 L-12.7 -25.7 L-24.5 -37.5 Z M12.7 -49.3 L24.5 -37.5 L12.7 -25.7 L0.8999999999999986 -37.5 Z M-37.5 -24.5 L-25.7 -12.7 L-37.5 -0.8999999999999986 L-49.3 -12.7 Z M-37.5 0.8999999999999986 L-25.7 12.7 L-37.5 24.5 L-49.3 12.7 Z M37.5 -24.5 L49.3 -12.7 L37.5 -0.8999999999999986 L25.7 -12.7 Z M37.5 0.8999999999999986 L49.3 12.7 L37.5 24.5 L25.7 12.7 Z M-12.7 25.7 L-0.8999999999999986 37.5 L-12.7 49.3 L-24.5 37.5 Z M12.7 25.7 L24.5 37.5 L12.7 49.3 L0.8999999999999986 37.5 Z" fill="#e6e4e2"/></svg><div class="t" style="left:700.08px;top:1194.73px;font-size:20.2px;color:#333;font-weight:400;letter-spacing:-0.423px;">Nico Test E-</div><div class="t" style="left:700.08px;top:1222.03px;font-size:20.2px;color:#333;font-weight:400;letter-spacing:-0.197px;">Learning 4</div><div class="t" style="left:938.18px;top:1208.73px;font-size:20.2px;color:#333;font-weight:400;letter-spacing:-0.400px;">E-Learning</div><div class="t" style="left:1204.60px;top:1208.73px;font-size:20.2px;color:#333;font-weight:400;letter-spacing:-0.056px;">Test post</div><div class="t" style="left:1905.89px;top:1208.73px;font-size:20.2px;color:#333;font-weight:400;">0</div><div class="t" style="left:2088.39px;top:1208.73px;font-size:20.2px;color:#333;font-weight:400;">0</div><svg style="position:absolute;left:2204.50px;top:1202.90px;" width="36.00" height="30.80" viewBox="155 245 1280 1095"><g fill="#c4c7cb" stroke="#c4c7cb" stroke-width="45" stroke-linejoin="round"><path d="M455 245 L605 245 L690 380 L540 388 L320 745 L580 1190 L1050 1190 L1265 835 L1200 690 L1355 690 L1435 830 L1130 1340 L500 1340 L155 740 Z"/><path d="M720 255 L850 255 L915 380 L785 380 Z"/><path d="M965 255 L1090 255 L1160 380 L1030 380 Z"/><path d="M605 475 L730 475 L805 600 L675 600 Z"/><path d="M850 475 L975 475 L1050 600 L920 600 Z"/><path d="M1090 475 L1215 475 L1295 600 L1160 600 Z"/><path d="M735 695 L860 695 L935 820 L805 820 Z"/><path d="M975 695 L1100 695 L1175 820 L1045 820 Z"/></g></svg><div class="t" style="left:2253.18px;top:1208.73px;font-size:20.2px;color:#333;font-weight:400;letter-spacing:-0.400px;">E-Learning</div><div class="t" style="left:2575.74px;top:1208.73px;font-size:20.2px;color:#333;font-weight:400;letter-spacing:-0.366px;">06. März</div><div style="position:absolute;left:616.00px;top:1348.00px;width:2173.00px;height:1.00px;background:#e5e6e7;"></div><svg style="position:absolute;left:647.00px;top:1286.00px" width="38" height="38" viewBox="-50 -50 100 100"><circle r="50" fill="#1e1e1e"/><path d="M-12.7 -49.3 L-0.8999999999999986 -37.5 L-12.7 -25.7 L-24.5 -37.5 Z M12.7 -49.3 L24.5 -37.5 L12.7 -25.7 L0.8999999999999986 -37.5 Z M-37.5 -24.5 L-25.7 -12.7 L-37.5 -0.8999999999999986 L-49.3 -12.7 Z M-37.5 0.8999999999999986 L-25.7 12.7 L-37.5 24.5 L-49.3 12.7 Z M37.5 -24.5 L49.3 -12.7 L37.5 -0.8999999999999986 L25.7 -12.7 Z M37.5 0.8999999999999986 L49.3 12.7 L37.5 24.5 L25.7 12.7 Z M-12.7 25.7 L-0.8999999999999986 37.5 L-12.7 49.3 L-24.5 37.5 Z M12.7 25.7 L24.5 37.5 L12.7 49.3 L0.8999999999999986 37.5 Z" fill="#e6e4e2"/></svg><div class="t" style="left:700.08px;top:1281.33px;font-size:20.2px;color:#333;font-weight:400;letter-spacing:-0.423px;">Nico Test E-</div><div class="t" style="left:700.08px;top:1308.63px;font-size:20.2px;color:#333;font-weight:400;letter-spacing:-0.197px;">Learning 4</div><div class="t" style="left:938.18px;top:1295.33px;font-size:20.2px;color:#333;font-weight:400;letter-spacing:-0.400px;">E-Learning</div><div style="position:absolute;left:1204.30px;top:1288.40px;width:77.50px;height:33.00px;background:#2f8ad6;border-radius:3px;"></div><div class="t" style="left:1210.65px;top:1296.34px;font-size:19.6px;color:#ffffff;font-weight:400;letter-spacing:0.222px;">Wichtig</div><div class="t" style="left:1294.95px;top:1292.83px;font-size:20.2px;color:#333;font-weight:400;letter-spacing:-0.089px;">Wichtiger test post</div><div class="t" style="left:1905.89px;top:1295.33px;font-size:20.2px;color:#333;font-weight:400;">0</div><div class="t" style="left:2088.39px;top:1295.33px;font-size:20.2px;color:#333;font-weight:400;">0</div><svg style="position:absolute;left:2204.50px;top:1289.50px;" width="36.00" height="30.80" viewBox="155 245 1280 1095"><g fill="#c4c7cb" stroke="#c4c7cb" stroke-width="45" stroke-linejoin="round"><path d="M455 245 L605 245 L690 380 L540 388 L320 745 L580 1190 L1050 1190 L1265 835 L1200 690 L1355 690 L1435 830 L1130 1340 L500 1340 L155 740 Z"/><path d="M720 255 L850 255 L915 380 L785 380 Z"/><path d="M965 255 L1090 255 L1160 380 L1030 380 Z"/><path d="M605 475 L730 475 L805 600 L675 600 Z"/><path d="M850 475 L975 475 L1050 600 L920 600 Z"/><path d="M1090 475 L1215 475 L1295 600 L1160 600 Z"/><path d="M735 695 L860 695 L935 820 L805 820 Z"/><path d="M975 695 L1100 695 L1175 820 L1045 820 Z"/></g></svg><div class="t" style="left:2253.18px;top:1295.33px;font-size:20.2px;color:#333;font-weight:400;letter-spacing:-0.400px;">E-Learning</div><div class="t" style="left:2575.74px;top:1295.33px;font-size:20.2px;color:#333;font-weight:400;letter-spacing:-0.366px;">06. März</div><div style="position:absolute;left:616.00px;top:1434.00px;width:2173.00px;height:1.00px;background:#e5e6e7;"></div><svg style="position:absolute;left:647.00px;top:1372.60px" width="38" height="38" viewBox="-50 -50 100 100"><circle r="50" fill="#8f8f8f"/><path d="M-12.7 -49.3 L-0.8999999999999986 -37.5 L-12.7 -25.7 L-24.5 -37.5 Z M12.7 -49.3 L24.5 -37.5 L12.7 -25.7 L0.8999999999999986 -37.5 Z M-37.5 -24.5 L-25.7 -12.7 L-37.5 -0.8999999999999986 L-49.3 -12.7 Z M-37.5 0.8999999999999986 L-25.7 12.7 L-37.5 24.5 L-49.3 12.7 Z M37.5 -24.5 L49.3 -12.7 L37.5 -0.8999999999999986 L25.7 -12.7 Z M37.5 0.8999999999999986 L49.3 12.7 L37.5 24.5 L25.7 12.7 Z M-12.7 25.7 L-0.8999999999999986 37.5 L-12.7 49.3 L-24.5 37.5 Z M12.7 25.7 L24.5 37.5 L12.7 49.3 L0.8999999999999986 37.5 Z" fill="#ececec"/></svg><div class="t" style="left:700.08px;top:1367.93px;font-size:20.2px;color:#8c8c8c;font-weight:400;letter-spacing:-0.423px;">Nico Test E-</div><div class="t" style="left:700.08px;top:1395.23px;font-size:20.2px;color:#8c8c8c;font-weight:400;letter-spacing:-0.197px;">Learning 4</div><div class="t" style="left:938.18px;top:1381.93px;font-size:20.2px;color:#333;font-weight:400;letter-spacing:-0.400px;">E-Learning</div><div class="t" style="left:1203.38px;top:1381.93px;font-size:20.2px;color:#8c8c8c;font-weight:400;letter-spacing:0.348px;">Entwurf</div><div class="t" style="left:1905.89px;top:1381.93px;font-size:20.2px;color:#8c8c8c;font-weight:400;">0</div><div class="t" style="left:2088.39px;top:1381.93px;font-size:20.2px;color:#8c8c8c;font-weight:400;">0</div><svg style="position:absolute;left:2204.50px;top:1376.10px;" width="36.00" height="30.80" viewBox="155 245 1280 1095"><g fill="#c4c7cb" stroke="#c4c7cb" stroke-width="45" stroke-linejoin="round"><path d="M455 245 L605 245 L690 380 L540 388 L320 745 L580 1190 L1050 1190 L1265 835 L1200 690 L1355 690 L1435 830 L1130 1340 L500 1340 L155 740 Z"/><path d="M720 255 L850 255 L915 380 L785 380 Z"/><path d="M965 255 L1090 255 L1160 380 L1030 380 Z"/><path d="M605 475 L730 475 L805 600 L675 600 Z"/><path d="M850 475 L975 475 L1050 600 L920 600 Z"/><path d="M1090 475 L1215 475 L1295 600 L1160 600 Z"/><path d="M735 695 L860 695 L935 820 L805 820 Z"/><path d="M975 695 L1100 695 L1175 820 L1045 820 Z"/></g></svg><div class="t" style="left:2253.18px;top:1381.93px;font-size:20.2px;color:#333;font-weight:400;letter-spacing:-0.400px;">E-Learning</div><div class="t" style="left:2575.74px;top:1381.93px;font-size:20.2px;color:#333;font-weight:400;letter-spacing:-0.366px;">06. März</div><div style="position:absolute;left:616.00px;top:1520.70px;width:2173.00px;height:1.00px;background:#e5e6e7;"></div><svg style="position:absolute;left:647.00px;top:1458.80px" width="38" height="38" viewBox="-50 -50 100 100"><circle r="50" fill="#1e1e1e"/><path d="M-12.7 -49.3 L-0.8999999999999986 -37.5 L-12.7 -25.7 L-24.5 -37.5 Z M12.7 -49.3 L24.5 -37.5 L12.7 -25.7 L0.8999999999999986 -37.5 Z M-37.5 -24.5 L-25.7 -12.7 L-37.5 -0.8999999999999986 L-49.3 -12.7 Z M-37.5 0.8999999999999986 L-25.7 12.7 L-37.5 24.5 L-49.3 12.7 Z M37.5 -24.5 L49.3 -12.7 L37.5 -0.8999999999999986 L25.7 -12.7 Z M37.5 0.8999999999999986 L49.3 12.7 L37.5 24.5 L25.7 12.7 Z M-12.7 25.7 L-0.8999999999999986 37.5 L-12.7 49.3 L-24.5 37.5 Z M12.7 25.7 L24.5 37.5 L12.7 49.3 L0.8999999999999986 37.5 Z" fill="#e6e4e2"/></svg><div class="t" style="left:700.08px;top:1454.13px;font-size:20.2px;color:#333;font-weight:400;letter-spacing:-0.423px;">Nico Test E-</div><div class="t" style="left:700.08px;top:1481.43px;font-size:20.2px;color:#333;font-weight:400;letter-spacing:-0.197px;">Learning 4</div><div class="t" style="left:938.18px;top:1468.13px;font-size:20.2px;color:#333;font-weight:400;letter-spacing:-0.400px;">E-Learning</div><div style="position:absolute;left:1204.30px;top:1461.20px;width:77.50px;height:33.00px;background:#2f8ad6;border-radius:3px;"></div><div class="t" style="left:1210.65px;top:1469.14px;font-size:19.6px;color:#ffffff;font-weight:400;letter-spacing:0.222px;">Wichtig</div><div class="t" style="left:1294.60px;top:1465.63px;font-size:20.2px;color:#333;font-weight:400;letter-spacing:-0.170px;">Test</div><div class="t" style="left:1905.62px;top:1468.13px;font-size:20.2px;color:#333;font-weight:400;">1</div><div class="t" style="left:2088.12px;top:1468.13px;font-size:20.2px;color:#333;font-weight:400;">1</div><svg style="position:absolute;left:2204.50px;top:1462.30px;" width="36.00" height="30.80" viewBox="155 245 1280 1095"><g fill="#c4c7cb" stroke="#c4c7cb" stroke-width="45" stroke-linejoin="round"><path d="M455 245 L605 245 L690 380 L540 388 L320 745 L580 1190 L1050 1190 L1265 835 L1200 690 L1355 690 L1435 830 L1130 1340 L500 1340 L155 740 Z"/><path d="M720 255 L850 255 L915 380 L785 380 Z"/><path d="M965 255 L1090 255 L1160 380 L1030 380 Z"/><path d="M605 475 L730 475 L805 600 L675 600 Z"/><path d="M850 475 L975 475 L1050 600 L920 600 Z"/><path d="M1090 475 L1215 475 L1295 600 L1160 600 Z"/><path d="M735 695 L860 695 L935 820 L805 820 Z"/><path d="M975 695 L1100 695 L1175 820 L1045 820 Z"/></g></svg><div class="t" style="left:2253.18px;top:1468.13px;font-size:20.2px;color:#333;font-weight:400;letter-spacing:-0.400px;">E-Learning</div><div class="t" style="left:2575.49px;top:1468.13px;font-size:20.2px;color:#333;font-weight:400;letter-spacing:-0.644px;">28. Feb.</div><svg style="position:absolute;left:647.00px;top:1546.00px;border-radius:50%;overflow:hidden" width="38" height="38" viewBox="-50 -50 100 100"><clipPath id="lc"><circle r="50"/></clipPath><g clip-path="url(#lc)"><circle r="50" fill="#27313d"/><path d="M0.3 -52 L12 -50 L2.9 -25.9 Z" fill="#e9e9e9"/><path d="M52 -0.6 L50 10 L26.5 1.1 Z" fill="#e9e9e9"/><path d="M0.3 52 L-12 50 L-0.6 27.4 Z" fill="#e9e9e9"/><path d="M-52 -11 L-52 -0.6 L-26.8 -1 Z" fill="#e9e9e9"/><path d="M-26 -37.3 L-0.6 -25.1 L-25.1 -25.1 Z" fill="#e9e9e9"/><path d="M35.2 -25.1 L25.6 -2.4 L25.6 -25.9 Z" fill="#e9e9e9"/><path d="M26.5 34.4 L3.8 24.7 L26.5 24.7 Z" fill="#e9e9e9"/><path d="M-37.3 26.5 L-25.1 2 L-25.1 26.5 Z" fill="#e9e9e9"/><rect x="-41.7" y="-30.3" width="16.6" height="6" fill="#c23b22"/><rect x="-10.2" y="-23.3" width="10.5" height="14.9" fill="#c23b22"/><rect x="11.6" y="-7.6" width="14.9" height="7.9" fill="#c23b22"/><rect x="-22.5" y="2" width="11.4" height="7" fill="#c23b22"/><rect x="0.3" y="8.1" width="10.5" height="14.9" fill="#c23b22"/><rect x="27.4" y="-39" width="7.9" height="10.5" fill="#8f3f32"/><rect x="30" y="23.9" width="11.4" height="8.7" fill="#8f3f32"/><rect x="-31.2" y="30.9" width="9.6" height="7.9" fill="#8f3f32"/></g></svg><div class="t" style="left:700.08px;top:1541.33px;font-size:20.2px;color:#333;font-weight:400;letter-spacing:-0.222px;">Leon Probst Test</div><div class="t" style="left:700.19px;top:1568.63px;font-size:20.2px;color:#333;font-weight:400;letter-spacing:0.216px;">User | Allthings</div><div class="t" style="left:939.80px;top:1555.33px;font-size:20.2px;color:#333;font-weight:400;letter-spacing:-0.221px;">Arlewo</div><div class="t" style="left:1203.38px;top:1542.83px;font-size:20.2px;color:#333;font-weight:400;letter-spacing:0.018px;">Liebe Mieterinnen und Mieter, wir möchten Sie darüber</div><div class="t" style="left:1203.69px;top:1570.03px;font-size:20.2px;color:#333;font-weight:400;letter-spacing:-0.087px;">informieren, dass sich unsere Öffnungszeiten über die...</div><div class="t" style="left:1905.89px;top:1555.33px;font-size:20.2px;color:#333;font-weight:400;">0</div><div class="t" style="left:2088.39px;top:1555.33px;font-size:20.2px;color:#333;font-weight:400;">0</div><svg style="position:absolute;left:2204.50px;top:1549.50px;" width="36.00" height="30.80" viewBox="155 245 1280 1095"><g fill="#c4c7cb" stroke="#c4c7cb" stroke-width="45" stroke-linejoin="round"><path d="M455 245 L605 245 L690 380 L540 388 L320 745 L580 1190 L1050 1190 L1265 835 L1200 690 L1355 690 L1435 830 L1130 1340 L500 1340 L155 740 Z"/><path d="M720 255 L850 255 L915 380 L785 380 Z"/><path d="M965 255 L1090 255 L1160 380 L1030 380 Z"/><path d="M605 475 L730 475 L805 600 L675 600 Z"/><path d="M850 475 L975 475 L1050 600 L920 600 Z"/><path d="M1090 475 L1215 475 L1295 600 L1160 600 Z"/><path d="M735 695 L860 695 L935 820 L805 820 Z"/><path d="M975 695 L1100 695 L1175 820 L1045 820 Z"/></g></svg><div class="t" style="left:2253.18px;top:1555.33px;font-size:20.2px;color:#333;font-weight:400;letter-spacing:-0.400px;">E-Learning</div><div class="t" style="left:2574.99px;top:1555.33px;font-size:20.2px;color:#333;font-weight:400;letter-spacing:-0.600px;">16. Dez. 24</div><div style="position:absolute;left:2850.00px;top:178.00px;width:30.00px;height:1452.00px;background:#f6f6f6;border-left:1px solid #e2e2e2;box-sizing:border-box;"></div><div style="position:absolute;left:2858.00px;top:180.00px;width:16.00px;height:1444.00px;background:#b3b3b3;border-radius:8px;"></div><div style="position:absolute;left:2738px;top:1488px;width:95px;height:95px;border-radius:50%;background:#fbfbfb;box-shadow:0 6px 14px rgba(0,0,0,0.28)"></div><svg style="position:absolute;left:2757.40px;top:1511.40px;" width="56.20" height="48.08" viewBox="155 245 1280 1095"><g fill="#000000" stroke="#000000" stroke-width="22" stroke-linejoin="round"><path d="M455 245 L605 245 L690 380 L540 388 L320 745 L580 1190 L1050 1190 L1265 835 L1200 690 L1355 690 L1435 830 L1130 1340 L500 1340 L155 740 Z"/><path d="M720 255 L850 255 L915 380 L785 380 Z"/><path d="M965 255 L1090 255 L1160 380 L1030 380 Z"/><path d="M605 475 L730 475 L805 600 L675 600 Z"/><path d="M850 475 L975 475 L1050 600 L920 600 Z"/><path d="M1090 475 L1215 475 L1295 600 L1160 600 Z"/><path d="M735 695 L860 695 L935 820 L805 820 Z"/><path d="M975 695 L1100 695 L1175 820 L1045 820 Z"/></g></svg><div style="position:absolute;left:2812px;top:1491px;width:26px;height:26px;border-radius:50%;background:#bd2c24"></div><div class="t" style="left:2820.30px;top:1496.05px;font-size:17px;color:#ffffff;font-weight:700;">9</div><div style="position:absolute;left:0;top:1594px;width:358px;height:40px;background:#262626;border:1px solid #4a4a4a;border-radius:0 5px 0 0;box-sizing:border-box"></div><div class="t" style="left:7.38px;top:1599.60px;font-size:24px;color:#f2f2f2;font-weight:400;letter-spacing:0.074px;">cockpit.allthings.me/pinboard/all</div><svg style="position:absolute;left:355px;top:247px" width="28" height="40" viewBox="0 0 28 40"><path d="M3.9 3 L4.1 30.5 L9.8 23.8 L14 34 L19.6 31.6 L15.6 22.8 L23.6 22.8 Z" fill="#000" stroke="#fff" stroke-width="2.4" stroke-linejoin="miter"/></svg>
</body></html>
